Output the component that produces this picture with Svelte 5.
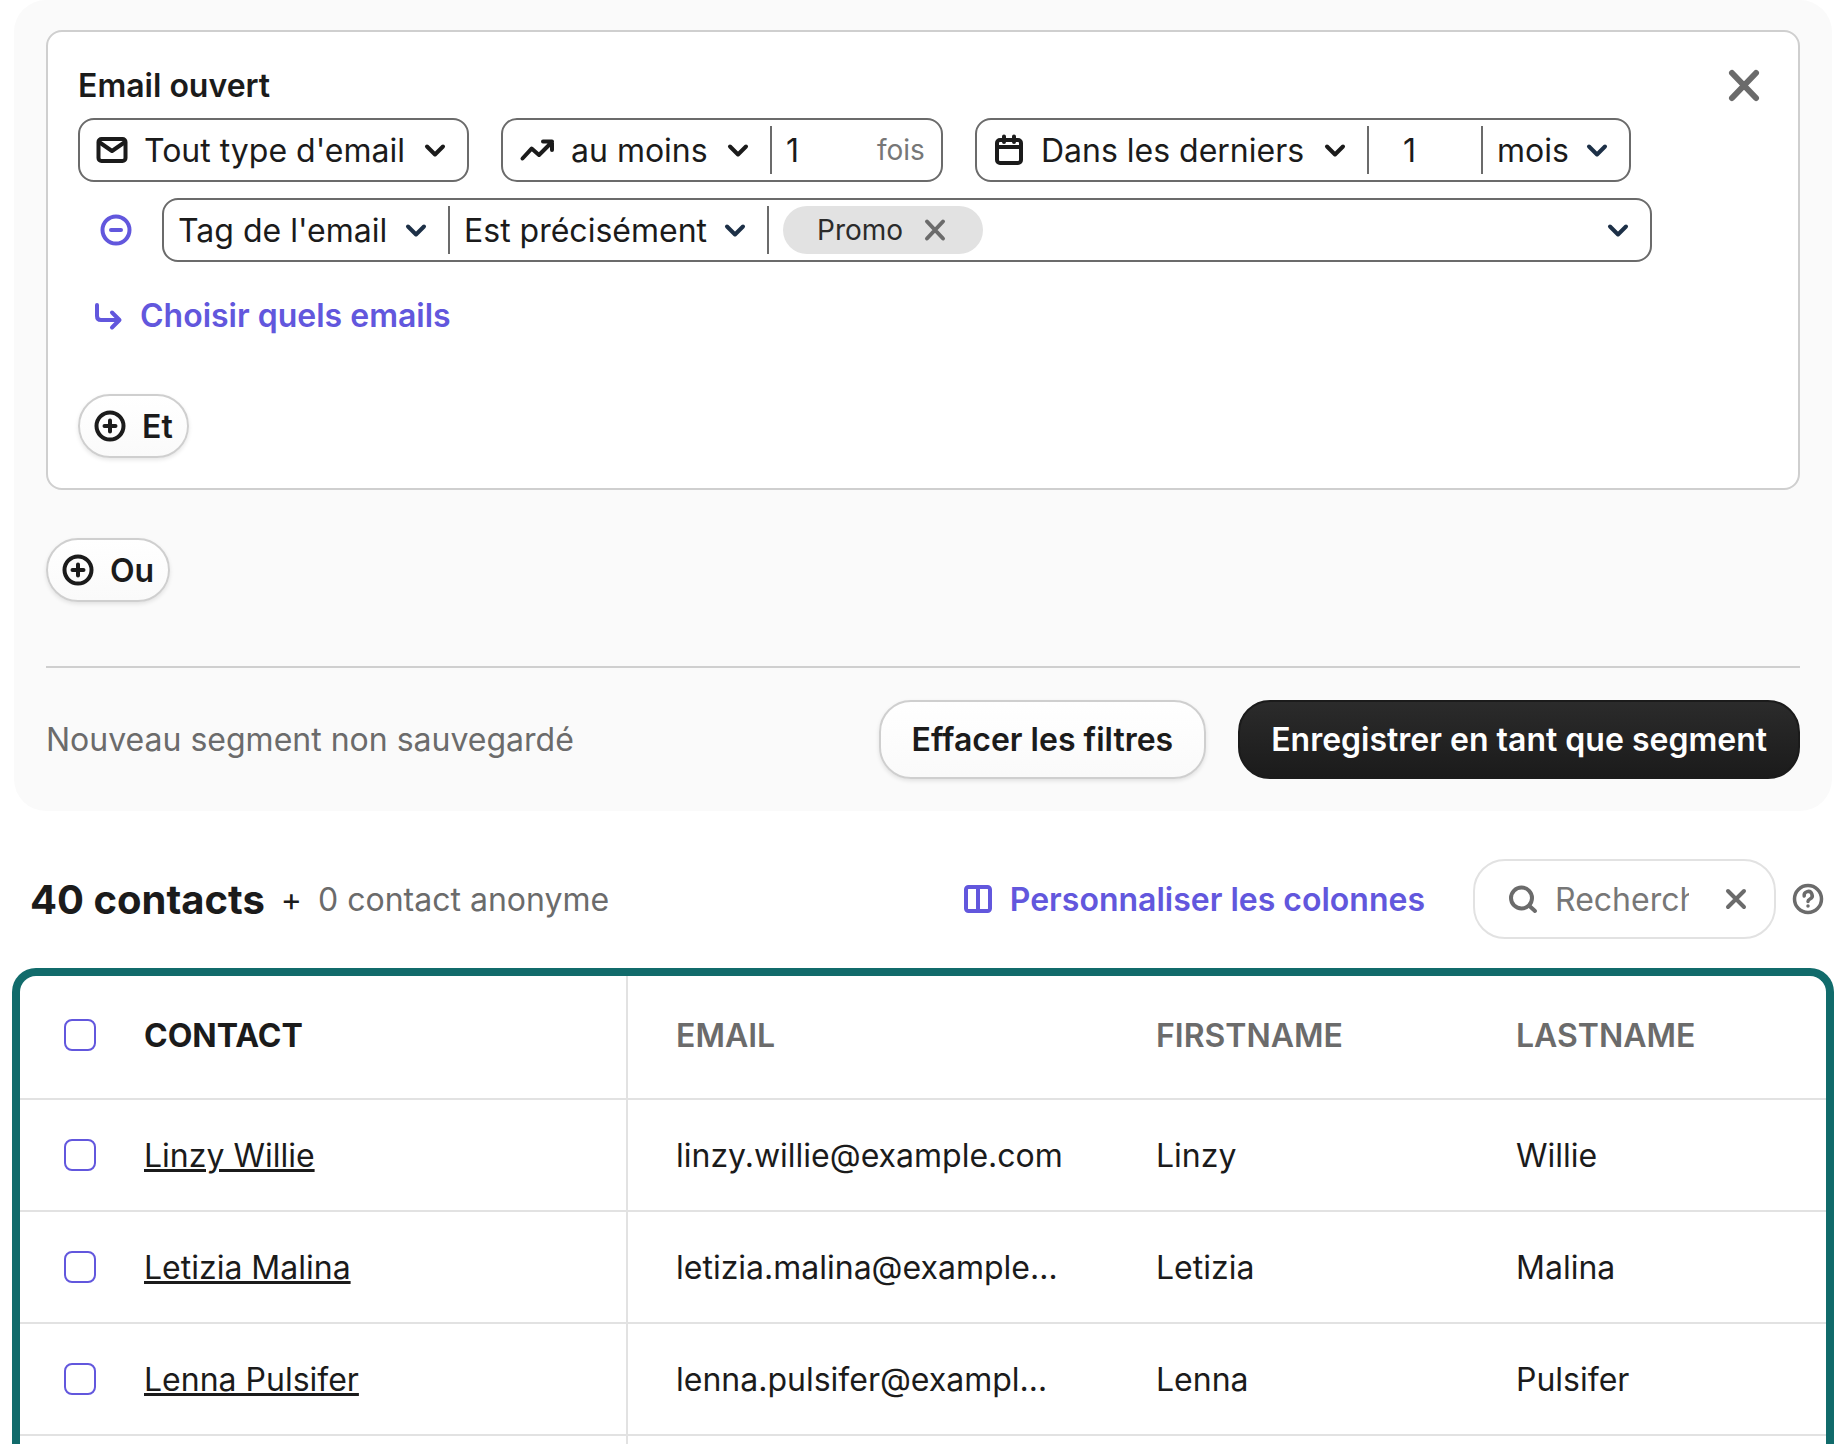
<script>
  let search = $state('');
  let times = $state('1');
  let duration = $state('1');
  const contacts = [
    { first: 'Linzy', last: 'Willie', email: 'linzy.willie@example.com' },
    { first: 'Letizia', last: 'Malina', email: 'letizia.malina@example.com' },
    { first: 'Lenna', last: 'Pulsifer', email: 'lenna.pulsifer@example.com' }
  ];
</script>

{#snippet select(label, value, navy)}
  <span class="pick" class:tight={navy}>
    <select aria-label={label}><option>{value}</option></select>
    <svg class="chevron" class:navy width="32" height="32" viewBox="0 0 32 32" aria-hidden="true"><path d="M8 12.5L16 20.5L24 12.5" /></svg>
  </span>
{/snippet}

{#snippet plus()}
  <svg width="32" height="32" viewBox="0 0 32 32" aria-hidden="true"><circle cx="16" cy="16" r="13.5" /><path d="M16 10.5V21.5M10.5 16H21.5" /></svg>
{/snippet}

<div class="page">
  <section class="panel">
    <div class="card">
      <header class="card-head">
        <h2>Email ouvert</h2>
        <button class="icon-btn close" aria-label="Fermer">
          <svg width="48" height="46" viewBox="0 0 48 46"><path d="M12 11L36 36M36 11L12 36" /></svg>
        </button>
      </header>

      <div class="filters">
        <div class="field">
          <svg class="lead" width="32" height="32" viewBox="0 0 32 32" aria-hidden="true"><rect x="2.5" y="5" width="27" height="22" rx="3" /><path d="M3 8L16 17L29 8" /></svg>
          {@render select("Type d'email", "Tout type d'email", false)}
        </div>
        <div class="field">
          <svg class="lead" width="36" height="32" viewBox="0 0 36 32" aria-hidden="true"><path d="M3.5 24.5L12.6 14.6L20 21L33 8M24 7.5H33V16" /></svg>
          {@render select('Fréquence', 'au moins', false)}
          <span class="sep"></span>
          <input class="num times" type="text" inputmode="numeric" aria-label="Nombre de fois" bind:value={times} />
          <span class="unit">fois</span>
        </div>
        <div class="field">
          <svg class="lead" width="32" height="32" viewBox="0 0 32 32" aria-hidden="true"><rect x="4" y="6" width="24" height="23" rx="3" /><path d="M4 13H28M11 2.5V8M21 2.5V8" /></svg>
          {@render select('Période', 'Dans les derniers', false)}
          <span class="sep"></span>
          <input class="num duration" type="text" inputmode="numeric" aria-label="Durée" bind:value={duration} />
          <span class="sep"></span>
          {@render select('Unité', 'mois', true)}
        </div>
      </div>

      <div class="subfilter">
        <button class="icon-btn minus" aria-label="Retirer la condition">
          <svg width="32" height="32" viewBox="0 0 32 32"><circle cx="16" cy="16" r="13.5" /><path d="M11 16H21" /></svg>
        </button>
        <div class="field wide">
          {@render select('Critère', "Tag de l'email", true)}
          <span class="sep"></span>
          {@render select('Opérateur', 'Est précisément', true)}
          <span class="sep"></span>
          <span class="chip">
            Promo
            <button class="icon-btn" aria-label="Retirer Promo">
              <svg width="32" height="32" viewBox="0 0 32 32"><path d="M8 7.5L24 24.5M24 7.5L8 24.5" /></svg>
            </button>
          </span>
          <button class="icon-btn more" aria-label="Ouvrir la liste">
            <svg class="chevron navy" width="32" height="32" viewBox="0 0 32 32"><path d="M8 12.5L16 20.5L24 12.5" /></svg>
          </button>
        </div>
      </div>

      <button class="link choose">
        <svg width="32" height="32" viewBox="0 0 32 32" aria-hidden="true"><path d="M5 6V17Q5 21 9 21H27M20 13.500L27.500 21L20 28.500" /></svg>
        Choisir quels emails
      </button>

      <button class="pill">{@render plus()}Et</button>
    </div>

    <button class="pill or">{@render plus()}Ou</button>

    <footer>
      <p>Nouveau segment non sauvegardé</p>
      <button class="big">Effacer les filtres</button>
      <button class="big dark">Enregistrer en tant que segment</button>
    </footer>
  </section>

  <div class="toolbar">
    <h1>40 contacts</h1>
    <span class="plus-sign">+</span>
    <span class="anon">0 contact anonyme</span>
    <button class="link columns">
      <svg width="32" height="32" viewBox="0 0 32 32" aria-hidden="true"><rect x="4" y="4" width="24" height="24" rx="2.5" /><path d="M16 4V28" /></svg>
      Personnaliser les colonnes
    </button>
    <div class="search">
      <svg width="32" height="32" viewBox="0 0 32 32" aria-hidden="true"><circle cx="14.5" cy="15" r="10.5" /><path d="M22.5 23L28 28" /></svg>
      <input type="text" placeholder="Rechercher" aria-label="Rechercher" bind:value={search} />
      <button class="icon-btn" aria-label="Effacer la recherche">
        <svg width="32" height="32" viewBox="0 0 32 32"><path d="M8 8L24 24M24 8L8 24" /></svg>
      </button>
    </div>
    <button class="icon-btn help" aria-label="Aide">
      <svg width="32" height="32" viewBox="0 0 32 32"><circle cx="16" cy="16" r="13.5" /><path d="M12.2 13A4 4 0 1 1 18 16Q16 17 16 18.600M16 23V23.100" /></svg>
    </button>
  </div>

  <div class="frame">
    <table>
      <colgroup><col class="c-contact" /><col class="c-email" /><col class="c-first" /><col /></colgroup>
      <thead>
        <tr>
          <th scope="col"><div class="cell"><input type="checkbox" aria-label="Tout sélectionner" />CONTACT</div></th>
          <th scope="col">EMAIL</th>
          <th scope="col">FIRSTNAME</th>
          <th scope="col">LASTNAME</th>
        </tr>
      </thead>
      <tbody>
        {#each contacts as c}
          <tr>
            <td><div class="cell"><input type="checkbox" aria-label="Sélectionner {c.first} {c.last}" /><a href="#contact">{c.first} {c.last}</a></div></td>
            <td>{c.email}</td>
            <td>{c.first}</td>
            <td>{c.last}</td>
          </tr>
        {/each}
        <tr aria-hidden="true"><td></td><td></td><td></td><td></td></tr>
      </tbody>
    </table>
  </div>
</div>

<style>
  :global(body) {
    background: #fff;
  }
  .page {
    display: flex;
    flex-direction: column;
    height: 100vh;
    overflow: hidden;
    box-sizing: border-box;
    padding: 0 6px 0 12px;
    font-family: Inter, 'Liberation Sans', sans-serif;
    font-size: 32px;
    color: #1b1b1b;
  }
  .page * {
    box-sizing: border-box;
  }
  h1, h2, p {
    margin: 0;
  }
  button, input, select {
    font: inherit;
    color: inherit;
    margin: 0;
    padding: 0;
    border: 0;
    background: none;
    outline: 0;
  }
  svg {
    display: block;
    flex: none;
    fill: none;
    stroke: currentColor;
    stroke-width: 4;
    stroke-linecap: round;
    stroke-linejoin: round;
  }
  .panel {
    flex: none;
    margin: 0 2px;
    padding: 30px 32px 32px;
    border-radius: 32px;
    background: #fafafa;
  }
  .card {
    padding: 30px;
    border: 2px solid #cfcfcf;
    border-radius: 16px;
    background: #fff;
  }
  .card-head {
    display: flex;
    justify-content: space-between;
    align-items: center;
    height: 46px;
    margin-bottom: 10px;
  }
  h2 {
    font-size: 32px;
    font-weight: 600;
  }
  .icon-btn {
    display: grid;
    place-items: center;
    color: #6b6b6b;
  }
  .close svg {
    stroke-width: 6;
  }
  .filters {
    display: flex;
    gap: 32px;
  }
  .field {
    display: flex;
    align-items: center;
    height: 64px;
    padding: 0 16px;
    border: 2px solid #6b6b6b;
    border-radius: 16px;
    white-space: nowrap;
  }
  .lead {
    margin-right: 16px;
  }
  .pick {
    display: grid;
    align-items: center;
  }
  .pick > * {
    grid-area: 1 / 1;
  }
  select {
    appearance: none;
    height: 48px;
    padding-right: 46px;
  }
  .tight select {
    padding-right: 44px;
  }
  .chevron {
    justify-self: end;
    pointer-events: none;
    color: #1b1b1b;
  }
  .chevron.navy {
    color: #1d3047;
  }
  .sep {
    width: 2px;
    height: 48px;
    margin: 0 14px 0 16px;
    background: #6b6b6b;
  }
  .num {
    height: 48px;
  }
  .times {
    width: 91px;
  }
  .unit {
    font-size: 28px;
    color: #777;
  }
  .duration {
    width: 82px;
    padding-left: 20px;
  }
  .subfilter {
    display: flex;
    align-items: center;
    gap: 30px;
    margin: 16px 116px 0 22px;
  }
  .minus {
    color: #6257dd;
  }
  .wide {
    flex: 1;
    padding: 0 16px 0 14px;
  }
  .chip {
    display: flex;
    align-items: center;
    gap: 16px;
    height: 48px;
    padding: 0 32px 0 34px;
    border-radius: 24px;
    background: #e2e2e2;
    font-size: 28px;
    color: #2b2b2b;
  }
  .more {
    margin-left: auto;
  }
  .link {
    display: flex;
    align-items: center;
    gap: 16px;
    font-weight: 600;
    color: #6257dd;
  }
  .choose {
    height: 50px;
    margin: 28px 0 54px 14px;
  }
  .pill {
    display: flex;
    align-items: center;
    gap: 16px;
    height: 64px;
    padding: 0 14px;
    border: 2px solid #cfcfcf;
    border-radius: 32px;
    background: linear-gradient(#fff, #fafafa);
    box-shadow: 0 2px 4px rgba(0, 0, 0, 0.1);
    font-weight: 600;
  }
  .or {
    margin: 48px 0 64px;
  }
  footer {
    display: flex;
    align-items: center;
    gap: 32px;
    padding-top: 32px;
    border-top: 2px solid #cfcfcf;
  }
  footer p {
    flex: 1;
    color: #6b6b6b;
  }
  .big {
    height: 79px;
    padding: 0 31px;
    border: 2px solid #cfcfcf;
    border-radius: 32px;
    background: linear-gradient(#fff, #fafafa);
    box-shadow: 0 2px 4px rgba(0, 0, 0, 0.1);
    font-weight: 600;
    white-space: nowrap;
  }
  .dark {
    border-color: #1b1b1b;
    background: linear-gradient(#2b2b2b, #1b1b1b);
    box-shadow: none;
    color: #fff;
  }
  .toolbar {
    display: flex;
    flex: none;
    align-items: center;
    height: 80px;
    margin: 48px 10px 29px 18px;
    white-space: nowrap;
  }
  h1 {
    font-size: 40px;
    font-weight: 700;
  }
  .plus-sign {
    margin: 0 16px;
  }
  .anon {
    color: #6b6b6b;
  }
  .columns {
    margin: 0 48px 0 auto;
  }
  .search {
    display: flex;
    align-items: center;
    width: 303px;
    height: 80px;
    margin-right: 16px;
    padding: 0 22px 0 32px;
    border: 2px solid #e2e2e2;
    border-radius: 32px;
    color: #6b6b6b;
  }
  .search input {
    flex: 1;
    min-width: 0;
    margin: 0 31px 0 16px;
  }
  .search input::placeholder {
    color: #777;
    opacity: 1;
  }
  .help svg {
    stroke-width: 3.5;
  }
  .frame {
    flex: 1;
    min-height: 0;
    overflow: hidden;
    border: 8px solid #116b6b;
    border-bottom: 0;
    border-radius: 24px 24px 0 0;
  }
  table {
    width: 100%;
    table-layout: fixed;
    border-collapse: separate;
    border-spacing: 0;
  }
  .c-contact {
    width: 608px;
  }
  .c-email {
    width: 480px;
  }
  .c-first {
    width: 360px;
  }
  th, td {
    height: 112px;
    padding: 0 44px 0 48px;
    border-bottom: 2px solid #e2e2e2;
    font-weight: 400;
    text-align: left;
    white-space: nowrap;
    overflow: hidden;
    text-overflow: ellipsis;
  }
  th {
    height: 124px;
    padding-bottom: 4px;
    font-weight: 600;
    color: #6b6b6b;
  }
  th:first-child {
    font-weight: 700;
    color: #1b1b1b;
  }
  th:first-child, td:first-child {
    padding-left: 44px;
    border-right: 2px solid #e2e2e2;
  }
  .cell {
    display: flex;
    align-items: center;
    gap: 48px;
  }
  .cell input {
    appearance: none;
    flex: none;
    width: 32px;
    height: 32px;
    border: 2px solid #6257dd;
    border-radius: 8px;
  }
  .cell a {
    color: inherit;
    text-decoration-thickness: 3px;
  }
</style>
